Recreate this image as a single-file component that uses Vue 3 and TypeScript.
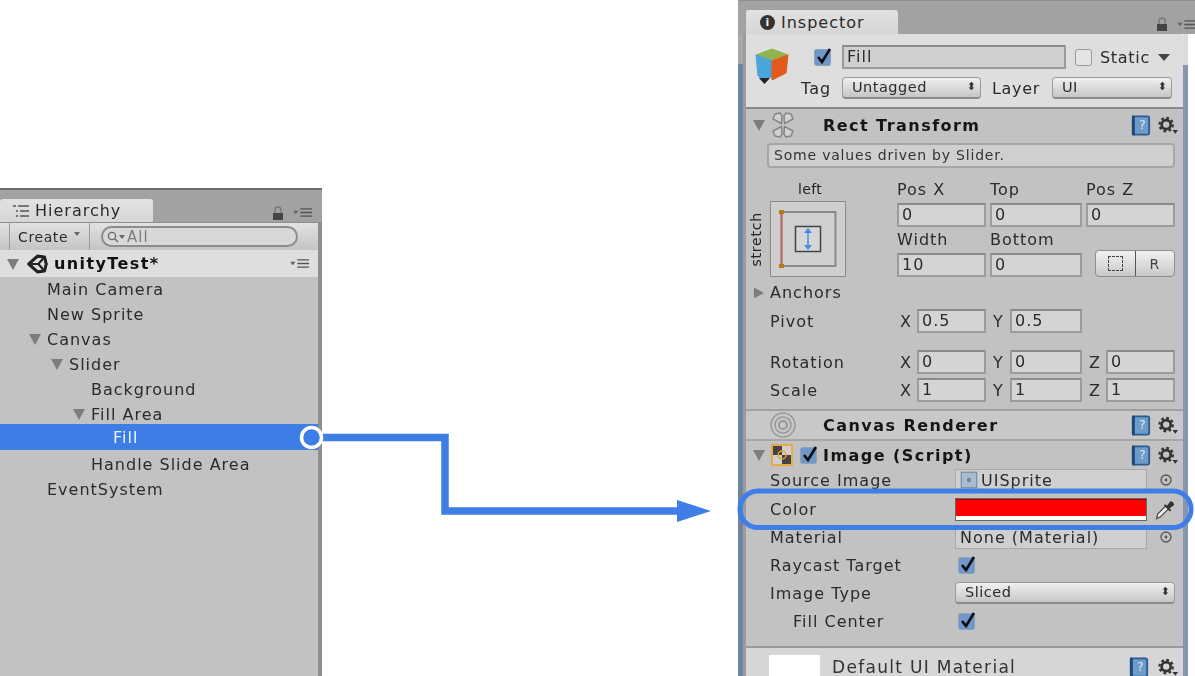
<script setup lang="ts">
const tree = [
  { name: 'Main Camera', indent: 47 },
  { name: 'New Sprite', indent: 47 },
  { name: 'Canvas', indent: 47, open: true },
  { name: 'Slider', indent: 69, open: true },
  { name: 'Background', indent: 91 },
  { name: 'Fill Area', indent: 91, open: true },
  { name: 'Fill', indent: 113, selected: true },
  { name: 'Handle Slide Area', indent: 91 },
  { name: 'EventSystem', indent: 47 },
]
const rowA = [
  { label: 'Pos X', value: '0' },
  { label: 'Top', value: '0' },
  { label: 'Pos Z', value: '0' },
]
const rowB = [
  { label: 'Width', value: '10' },
  { label: 'Bottom', value: '0' },
]
const vectors = [
  { name: 'Pivot', cls: 'v-pivot', cells: [['X', '0.5'], ['Y', '0.5']] },
  { name: 'Rotation', cls: 'v-rot', cells: [['X', '0'], ['Y', '0'], ['Z', '0']] },
  { name: 'Scale', cls: 'v-scale', cells: [['X', '1'], ['Y', '1'], ['Z', '1']] },
]
</script>

<template>
  <div class="page">
    <svg class="defs" width="0" height="0" aria-hidden="true">
      <symbol id="tri" viewBox="0 0 12 12"><path d="M0 1h12L6 12z" fill="#7d7d7d" /></symbol>
      <symbol id="menu" viewBox="0 0 22 10"><path d="M0 3h6L3 7z" fill="#666" /><path d="M8 1h13M8 5h13M8 9h13" stroke="#555" stroke-width="1.6" /></symbol>
      <symbol id="lock" viewBox="0 0 12 14"><path d="M3 7V4a3 3 0 0 1 6 0v3" fill="none" stroke="#777" stroke-width="1.4" /><rect x="1" y="7" width="10" height="7" fill="#444" /></symbol>
      <symbol id="book" viewBox="0 0 22 24"><rect x="1" y="1" width="20" height="22" rx="3" fill="#2a5a94" /><rect x="4" y="3" width="15" height="18" rx="1" fill="#6e9cc9" /><rect x="1" y="1" width="3" height="22" rx="1" fill="#1f4675" /></symbol>
      <symbol id="gear" viewBox="0 0 22 20"><circle cx="9" cy="9" r="5" fill="none" stroke="#333" stroke-width="3" /><circle cx="9" cy="9" r="7.4" fill="none" stroke="#333" stroke-width="2.4" stroke-dasharray="3 2.8" /><path d="M16 15h6l-3 4z" fill="#333" /></symbol>
      <symbol id="check" viewBox="0 0 18 18"><rect x=".5" y="1.500" width="16" height="16" rx="2" fill="#6f97c9" stroke="#8ea3ba" /><path d="M4 9l4 5 8-13" fill="none" stroke="#0d0d0d" stroke-width="2.6" /></symbol>
      <symbol id="target" viewBox="0 0 12 12"><circle cx="6" cy="6" r="5" fill="none" stroke="#555" stroke-width="1.3" /><circle cx="6" cy="6" r="1.4" fill="#555" /></symbol>
    </svg>

    <section class="hierarchy">
      <div class="strip h-strip">
        <div class="tab h-tab">
          <svg class="tab-icon" viewBox="0 0 16 12" width="16" height="12"><path d="M0 1h3M5 1h11M3 6h2M7 6h9M3 11h2M7 11h9" stroke="#555" stroke-width="1.5" /></svg>
          <span>Hierarchy</span>
        </div>
        <div class="strip-tools h-tools">
          <svg class="lock"><use href="#lock" /></svg>
          <svg class="menu"><use href="#menu" /></svg>
        </div>
      </div>
      <div class="h-body">
        <div class="toolbar">
          <span class="create">Create <i class="mini-tri"></i></span>
          <div class="search">
            <svg viewBox="0 0 18 12" width="18" height="12"><circle cx="5" cy="5" r="3.6" fill="none" stroke="#666" stroke-width="1.3" /><path d="M8 8l3 3" stroke="#666" stroke-width="1.4" /><path d="M12 4h6l-3 4z" fill="#666" /></svg>
            <span>All</span>
          </div>
        </div>
        <div class="scene">
          <svg class="tri scene-tri"><use href="#tri" /></svg>
          <svg class="unity" viewBox="0 0 24 24" width="21" height="22">
            <path d="M2 12L12 3l8 1 2 8-2 8-8 1z" fill="none" stroke="#222" stroke-width="3.500" stroke-linejoin="round" />
            <path d="M2 12h11l7-8M13 12l7 8" fill="none" stroke="#222" stroke-width="2.500" />
          </svg>
          <b>unityTest*</b>
          <svg class="menu scene-menu"><use href="#menu" /></svg>
        </div>
        <div
          v-for="row in tree"
          :key="row.name"
          class="tree-row"
          :class="{ selected: row.selected }"
          :style="{ paddingLeft: row.indent + 'px' }"
        >
          <svg v-if="row.open" class="tri tree-tri"><use href="#tri" /></svg>
          {{ row.name }}
        </div>
      </div>
    </section>

    <section class="inspector">
      <div class="strip i-strip">
        <div class="tab i-tab">
          <span class="info">i</span>
          <span>Inspector</span>
        </div>
        <div class="strip-tools i-tools">
          <svg class="lock"><use href="#lock" /></svg>
          <svg class="menu"><use href="#menu" /></svg>
        </div>
      </div>
      <div class="i-frame">
        <div class="gutter-left"></div>
        <div class="i-body">
          <div class="go-head">
            <svg class="cube" viewBox="0 0 36 40" width="36" height="40">
              <path d="M2 9L18 3l16 6-16 6z" fill="#8fb34f" stroke="#8fb34f" stroke-linejoin="round" />
              <path d="M2 9l16 6v16L8 33l-4-3z" fill="#4aa5dd" stroke="#4aa5dd" stroke-linejoin="round" />
              <path d="M18 15l16-6-2 18-14 7z" fill="#e25a1c" stroke="#e25a1c" stroke-linejoin="round" />
              <path d="M5 32h11l-5.500 6z" fill="#222" />
            </svg>
            <div class="go-rows">
              <div class="go-row one">
                <svg class="chk chk-go"><use href="#check" /></svg>
                <div class="name-field">Fill</div>
                <span class="box"></span>
                <span class="static">Static</span>
                <i class="static-tri"></i>
              </div>
              <div class="go-row two">
                <span class="tag-label">Tag</span>
                <div class="select tag-select">Untagged<span class="updown">⬍</span></div>
                <span class="layer-label">Layer</span>
                <div class="select layer-select">UI<span class="updown">⬍</span></div>
              </div>
            </div>
          </div>

          <div class="comp-head rect-head">
            <svg class="tri comp-tri"><use href="#tri" /></svg>
            <svg class="rect-icon" viewBox="0 0 26 26" width="26" height="26">
              <g fill="#d2d2d2" stroke="#858585" stroke-width="1.500" stroke-linejoin="round">
                <path d="M11.500 11.500L3 7l2-5 5-1 2 3z" />
                <path d="M14.500 11.500L23 7l-2-5-5-1-2 3z" />
                <path d="M11.500 14.500L3 19l2 5 5 1 2-3z" />
                <path d="M14.500 14.500L23 19l-2 5-5 1-2-3z" />
              </g>
            </svg>
            <span class="comp-title">Rect Transform</span>
            <span class="comp-tools">
              <span class="book"><svg><use href="#book" /></svg><em>?</em></span>
              <svg class="gear"><use href="#gear" /></svg>
            </span>
          </div>

          <div class="rect-body">
            <div class="note">Some values driven by Slider.</div>
            <div class="anchor-grid">
              <div class="anchor-col">
                <div class="anchor-left">left</div>
                <div class="anchor-wrap">
                  <span class="anchor-stretch">stretch</span>
                  <div class="anchor-box">
                    <svg viewBox="0 0 76 76" width="76" height="76">
                      <rect x=".5" y=".5" width="75" height="75" fill="#cfcfcf" stroke="#888" />
                      <rect x="11.500" y="11" width="54" height="54" fill="none" stroke="#8a8a8a" stroke-width="2" />
                      <path d="M11.500 11v54" stroke="#d05a50" stroke-width="1.500" />
                      <rect x="9" y="9" width="5" height="4" fill="#b57a14" />
                      <rect x="9" y="63" width="5" height="4" fill="#b57a14" />
                      <rect x="25.500" y="25.500" width="25" height="25" fill="#d6d6d6" stroke="#444" stroke-width="1.500" />
                      <path d="M38 29v18" stroke="#3f8fe8" stroke-width="1.500" />
                      <path d="M34 32h8l-4-5zM34 44h8l-4 5z" fill="#3f8fe8" />
                    </svg>
                  </div>
                </div>
              </div>
              <div class="field-col">
                <label v-for="f in rowA" :key="f.label" class="lab-field">
                  <span class="lab-text">{{ f.label }}</span>
                  <span class="field">{{ f.value }}</span>
                </label>
                <label v-for="f in rowB" :key="f.label" class="lab-field">
                  <span class="lab-text">{{ f.label }}</span>
                  <span class="field">{{ f.value }}</span>
                </label>
                <div class="rb-pair">
                  <span class="rb"><i class="dashed"></i></span>
                  <span class="rb r">R</span>
                </div>
              </div>
            </div>
            <div class="anchors-row"><svg class="side-tri" viewBox="0 0 12 12"><path d="M1 0l11 6-11 6z" fill="#7d7d7d" /></svg>Anchors</div>
            <div v-for="v in vectors" :key="v.name" class="vector" :class="v.cls">
              <span class="v-name">{{ v.name }}</span>
              <div class="v-cells">
                <div v-for="c in v.cells" :key="c[0]" class="v-cell">
                  <span class="axis">{{ c[0] }}</span>
                  <span class="field">{{ c[1] }}</span>
                </div>
              </div>
            </div>
          </div>

          <div class="comp-head canvas-head">
            <svg class="canvas-icon" viewBox="0 0 26 26" width="26" height="26">
              <g fill="none" stroke="#999">
                <circle cx="13" cy="13" r="12" stroke-width="1.500" />
                <circle cx="13" cy="13" r="8" stroke-width="1.500" />
                <circle cx="13" cy="13" r="4" stroke-width="2" />
              </g>
            </svg>
            <span class="comp-title">Canvas Renderer</span>
            <span class="comp-tools">
              <span class="book"><svg><use href="#book" /></svg><em>?</em></span>
              <svg class="gear"><use href="#gear" /></svg>
            </span>
          </div>

          <div class="comp-head image-head">
            <svg class="tri comp-tri"><use href="#tri" /></svg>
            <svg class="img-icon" viewBox="0 0 22 22" width="22" height="22">
              <rect x="1" y="1" width="20" height="20" fill="#cfcfcf" stroke="#f0a020" stroke-width="1.500" />
              <rect x="2" y="2" width="9" height="9" fill="#444" />
              <rect x="11" y="11" width="9" height="9" fill="#444" />
              <circle cx="11" cy="11" r="4" fill="none" stroke="#f0a020" stroke-width="1.500" />
            </svg>
            <svg class="chk chk-img"><use href="#check" /></svg>
            <span class="comp-title">Image (Script)</span>
            <span class="comp-tools">
              <span class="book"><svg><use href="#book" /></svg><em>?</em></span>
              <svg class="gear"><use href="#gear" /></svg>
            </span>
          </div>

          <div class="image-body">
            <div class="prop p-source">
              <span class="p-name">Source Image</span>
              <div class="obj-field source">
                <svg viewBox="0 0 18 18" width="20" height="20"><rect x="2" y="2" width="14" height="14" fill="#a9bccc" stroke="#6f8ba3" /><circle cx="9" cy="9" r="2" fill="#6f8ba3" /></svg>
                UISprite
              </div>
              <svg class="target"><use href="#target" /></svg>
            </div>
            <div class="prop p-color">
              <span class="p-name">Color</span>
              <div class="color-field"><i></i></div>
              <svg class="picker" viewBox="0 0 24 24" width="22" height="23">
                <path d="M3 22l1-5 9-9 3 3-9 9z" fill="#f0f0f0" stroke="#444" stroke-width="1.300" />
                <path d="M12 6l2 2 4-5 3 1 1 3-5 4 2 2-2 1-6-6z" fill="#333" />
              </svg>
            </div>
            <div class="prop p-mat">
              <span class="p-name">Material</span>
              <div class="obj-field mat">None (Material)</div>
              <svg class="target"><use href="#target" /></svg>
            </div>
            <div class="prop">
              <span class="p-name">Raycast Target</span>
              <svg class="chk chk-prop"><use href="#check" /></svg>
            </div>
            <div class="prop">
              <span class="p-name">Image Type</span>
              <div class="select type-select">Sliced<span class="updown">⬍</span></div>
            </div>
            <div class="prop">
              <span class="p-name indent">Fill Center</span>
              <svg class="chk chk-prop"><use href="#check" /></svg>
            </div>
          </div>

          <div class="material-head">
            <span class="swatch"></span>
            <span class="mat-title">Default UI Material</span>
            <span class="comp-tools mat-tools">
              <span class="book"><svg><use href="#book" /></svg><em>?</em></span>
              <svg class="gear"><use href="#gear" /></svg>
            </span>
          </div>
        </div>
        <div class="gutter-right"></div>
      </div>
    </section>

    <svg class="connector" viewBox="0 0 1195 676" width="1195" height="676" aria-hidden="true">
      <rect x="740" y="491" width="451" height="36.500" rx="18" fill="none" stroke="#3f7ee6" stroke-width="5" />
      <path d="M322 437.500H445V511H680" fill="none" stroke="#3f7ee6" stroke-width="7.500" />
      <path d="M677 500l34 11-34 11z" fill="#3f7ee6" />
      <circle cx="311.500" cy="437.500" r="10" fill="#3f7ee6" stroke="#fff" stroke-width="3.500" />
    </svg>
  </div>
</template>

<style>
html, body { margin: 0; background: #fff; }
</style>

<style scoped>
.page {
  position: relative;
  width: 1195px;
  height: 676px;
  display: flex;
  justify-content: space-between;
  overflow: hidden;
  background: #fff;
  font-family: "DejaVu Sans", sans-serif;
  font-size: 16px;
  letter-spacing: 1px;
  color: #2b2b2b;
}
.defs { position: absolute; }
.hierarchy, .inspector { filter: blur(0.45px); display: flex; flex-direction: column; }
.hierarchy { width: 322px; margin-top: 188px; height: 488px; background: #c2c2c2; }
.inspector { width: 457px; height: 676px; }

.strip { display: flex; justify-content: space-between; background: #a2a2a2; box-sizing: border-box; flex: none; }
.h-strip { height: 34px; padding-top: 9px; border-top: 2px solid #6d6d6d; }
.i-strip { height: 34px; padding: 9px 0 0 8px; border-top: 1px solid #8f8f8f; }
.tab {
  display: flex; align-items: center; gap: 6px;
  background: linear-gradient(#e2e2e2, #d6d6d6);
  border-radius: 3px 3px 0 0;
  box-sizing: border-box;
}
.h-tab { width: 153px; padding-left: 13px; }
.i-tab { width: 152px; padding-left: 14px; }
.tab-icon { flex: none; }
.info {
  width: 15px; height: 15px; border-radius: 50%;
  background: #333; color: #eee; font: bold 11px/15px "DejaVu Sans", sans-serif;
  text-align: center; letter-spacing: 0;
}
.strip-tools { display: flex; align-items: center; gap: 9px; padding-top: 4px; }
.h-tools { margin-right: 9px; }
.i-tools { margin-right: -2px; }
.lock { width: 12px; height: 14px; }
.menu { width: 20px; height: 9px; }

.h-body { flex: 1; border-right: 4px solid #8e8e8e; box-sizing: border-box; }
.toolbar {
  height: 28px; box-sizing: border-box;
  display: flex; align-items: center;
  background: linear-gradient(#e2e2e2, #c4c4c4);
  border-top: 1px solid #8e8e8e;
  padding-left: 9px;
  font-size: 14px;
}
.create {
  width: 81px; height: 100%;
  display: flex; align-items: center; gap: 6px;
  box-sizing: border-box; padding-left: 8px;
  border-left: 1px solid #9a9a9a; border-right: 1px solid #9a9a9a;
  letter-spacing: 0.6px;
}
.mini-tri { width: 0; height: 0; border: 3px solid transparent; border-top: 4px solid #666; border-bottom: 0; margin-bottom: 5px; }
.search {
  margin-left: 11px; width: 197px; height: 21px; box-sizing: border-box;
  border: 2px solid #8c8c8c; border-radius: 11px;
  display: flex; align-items: center; gap: 2px; padding-left: 4px;
  color: #7d7d7d; font-size: 15px; background: #d8d8d8;
}
.scene {
  height: 27px; display: flex; align-items: center; position: relative;
  background: #dedede; box-sizing: border-box; padding-left: 7px;
}
.scene b { margin-left: 6px; letter-spacing: 1.400px; color: #111; }
.tri { width: 12px; height: 12px; flex: none; }
.scene-tri { margin-right: 8px; }
.unity { flex: none; }
.scene-menu { margin-left: auto; margin-right: 8px; }

.tree-row {
  height: 25px; line-height: 25px; position: relative;
  box-sizing: border-box; white-space: nowrap;
}
.tree-row.selected {
  background: #3e7de6; color: #eef4ff;
  height: 26px; line-height: 28px;
  margin-top: -3px; margin-bottom: 2px;
}
.tree-tri { position: absolute; margin-left: -18px; top: 6px; }

.i-frame { flex: 1; display: flex; min-height: 0; background: #fff; margin-right: 7px; }
.gutter-left {
  width: 5px; flex: none;
  background: linear-gradient(#a8a8a8 30px, #6f83a3 30px);
}
.gutter-right {
  width: 5px; flex: none;
  background: linear-gradient(#dcdcdc 31px, #8596b3 31px);
  border-radius: 3px 0 0 0;
}
.i-body {
  flex: 1; min-width: 0;
  display: flex; flex-direction: column;
  background: #c2c2c2;
  border-left: 3px solid #9c9c9c;
}
.go-head {
  height: 75px; box-sizing: border-box;
  background: #dedede; border-bottom: 2px solid #8a8a8a;
  display: flex; padding: 11px 0 0 8px; flex: none;
}
.cube { flex: none; margin-top: 1px; }
.go-rows { margin-left: 24px; flex: 1; }
.go-row { display: flex; align-items: center; height: 24px; }
.one { margin-bottom: 7px; }
.chk { width: 18px; height: 18px; flex: none; }
.chk-go { margin-right: 10px; }
.name-field {
  width: 224px; height: 24px; box-sizing: border-box;
  background: #d0d0d0; border: 2px solid #9a9a9a; border-top-color: #8a8a8a;
  padding-left: 3px; line-height: 20px;
}
.box {
  width: 17px; height: 17px; margin-left: 9px; box-sizing: border-box;
  background: #e4e4e4; border: 1px solid #9c9c9c; border-radius: 3px;
}
.static { margin-left: 8px; letter-spacing: 0.7px; }
.static-tri { width: 0; height: 0; margin-left: 8px; border: 6px solid transparent; border-top: 7px solid #444; border-bottom: 0; }
.tag-label { width: 36px; margin-left: -13px; margin-right: 5px; flex: none; }
.select {
  height: 21px; box-sizing: border-box; position: relative;
  border: 1px solid #9b9b9b; border-bottom: 2px solid #8a8a8a; border-radius: 4px;
  background: linear-gradient(#f0f0f0, #c6c6c6);
  padding-left: 9px; line-height: 18px; font-size: 14.500px; letter-spacing: 0.5px;
}
.updown { position: absolute; right: 4px; top: 0; font-size: 11px; letter-spacing: 0; color: #333; }
.tag-select { width: 139px; height: 22px; }
.layer-label { width: 49px; margin: 0 11px; flex: none; letter-spacing: 0.7px; }
.layer-select { width: 120px; height: 22px; }

.comp-head { display: flex; align-items: center; position: relative; box-sizing: border-box; height: 30px; flex: none; }
.comp-tri { margin-left: 7px; }
.comp-title { font-weight: 700; color: #161616; letter-spacing: 1.450px; white-space: nowrap; }
.rect-head { padding-top: 2px; }
.rect-icon { margin-left: 5px; margin-right: 27px; }
.canvas-head { border-top: 2px solid #a0a0a0; background: #c8c8c8; padding-left: 24px; }
.canvas-icon { margin-right: 27px; }
.image-head { border-top: 2px solid #a6a6a6; }
.img-icon { margin-left: 6px; margin-right: 7px; }
.chk-img { margin-right: 5px; }
.comp-tools { margin-left: auto; display: flex; align-items: center; gap: 7px; margin-right: 5px; }
.book { position: relative; width: 20px; height: 23px; display: block; }
.book svg { width: 20px; height: 23px; display: block; }
.book em {
  position: absolute; inset: 0; text-align: center; font: normal 12px/23px "DejaVu Sans", sans-serif;
  color: #dfe9f3; letter-spacing: 0; padding-left: 3px;
}
.gear { width: 20px; height: 19px; }

.rect-body { height: 270px; box-sizing: border-box; position: relative; flex: none; }
.note {
  margin: 4px 0 0 21px; width: 408px; height: 25px; box-sizing: border-box;
  border: 2px solid #a6a6a6; border-radius: 4px; background: #cfcfcf;
  padding-left: 5px; line-height: 21px; font-size: 14px; letter-spacing: 0.8px; color: #333;
}
.anchor-grid { display: flex; margin-top: 9px; height: 103px; }
.anchor-col { width: 151px; padding-left: 2px; box-sizing: border-box; flex: none; }
.anchor-left { text-align: center; font-size: 14px; letter-spacing: 0.3px; height: 24px; line-height: 24px; width: 124px; color: #222; }
.anchor-wrap { display: flex; align-items: center; height: 76px; }
.anchor-stretch {
  width: 22px; writing-mode: vertical-rl; transform: rotate(180deg);
  text-align: center; font-size: 14px; letter-spacing: 0.8px; color: #222;
}
.anchor-box { height: 76px; width: 76px; }
.anchor-box svg { display: block; }
.field-col {
  width: 278px; display: grid;
  grid-template-columns: 89px 92px 89px; column-gap: 4px;
  grid-auto-rows: 50px; margin-top: 3px;
}
.lab-field { display: flex; flex-direction: column; }
.lab-text { height: 23px; line-height: 20px; }
.field {
  height: 24px; box-sizing: border-box; display: block;
  background: #d4d4d4; border: 2px solid #9c9c9c; border-top-color: #8a8a8a;
  padding-left: 3px; line-height: 20px;
}
.v-cell .field { flex: 1; }
.rb-pair { display: flex; align-self: end; margin: 0 0 3px 9px; width: 80px; height: 27px; box-sizing: border-box;
  border: 1px solid #8e8e8e; border-radius: 4px; background: linear-gradient(#f2f2f2, #c8c8c8); }
.rb { flex: 1; display: flex; align-items: center; justify-content: center; }
.rb.r { border-left: 1px solid #555; color: #444; font-size: 14px; }
.dashed { width: 13px; height: 13px; border: 1px dashed #444; }
.anchors-row { position: relative; height: 30px; line-height: 30px; padding-left: 24px; margin-top: -2px; }
.side-tri { position: absolute; left: 7px; top: 9px; width: 11px; height: 12px; }
.vector { display: flex; align-items: center; height: 28px; padding-left: 24px; }
.v-pivot { margin-top: -1px; margin-bottom: 13px; }
.v-name { width: 127px; flex: none; }
.v-cells { width: 278px; display: grid; grid-template-columns: 89px 92px 89px; column-gap: 4px; }
.v-cell { display: flex; align-items: center; height: 24px; }
.axis { width: 20px; flex: none; letter-spacing: 0; padding-left: 3px; box-sizing: border-box; }

.image-body { flex: 1; margin-top: -3px; }
.prop { height: 28px; display: flex; align-items: center; position: relative; }
.p-color { margin-top: 1px; }
.p-name { width: 209px; padding-left: 24px; flex: none; box-sizing: border-box; white-space: nowrap; }
.p-name.indent { padding-left: 47px; }
.obj-field {
  width: 192px; height: 23px; box-sizing: border-box; flex: none;
  background: #cfcfcf; border: 1px solid #a8a8a8;
  display: flex; align-items: center; white-space: nowrap;
}
.source { padding-left: 3px; gap: 2px; }
.mat { padding-left: 4px; }
.target { width: 12px; height: 12px; margin-left: 13px; }
.color-field {
  width: 192px; height: 23px; box-sizing: border-box; flex: none;
  border: 1px solid #666; background: #fff;
}
.color-field i { display: block; height: 17px; background: #ff0000; box-shadow: inset 0 1px 0 #a80000; }
.picker { margin-left: 7px; }
.chk-prop { margin-left: 3px; }
.type-select { width: 220px; height: 22px; }
.material-head {
  height: 30px; box-sizing: border-box; flex: none;
  display: flex; align-items: flex-start;
  background: #d6d6d6; border-top: 2px solid #9a9a9a;
  padding-left: 23px;
}
.swatch { width: 51px; height: 22px; background: #fff; margin: 7px 12px 0 0; flex: none; }
.mat-title { font-size: 17px; color: #333; margin-top: 7px; line-height: 24px; letter-spacing: 1.300px; }
.mat-tools { margin-top: 8px; gap: 9px; }
.connector { position: absolute; left: 0; top: 0; pointer-events: none; }
</style>
